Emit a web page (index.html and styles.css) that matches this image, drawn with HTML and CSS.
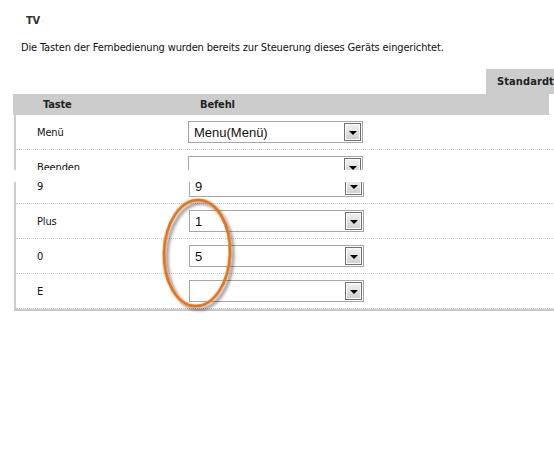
FILE: index.html
```html
<!DOCTYPE html>
<html lang="de">
<head>
<meta charset="utf-8">
<link rel="stylesheet" href="styles.css">
</head>
<body>
<div class="page">
  <h1 class="title">TV</h1>
  <p class="intro">Die Tasten der Fernbedienung wurden bereits zur Steuerung dieses Geräts eingerichtet.</p>
  <div class="tabs"><div class="tab">Standardtasten</div></div>
  <div class="table">
    <div class="part part-top">
      <div class="thead"><span class="th th-key">Taste</span><span class="th">Befehl</span></div>
      <div class="tbody">
        <div class="row">
          <span class="label">Menü</span>
          <div class="select"><span class="value">Menu(Menü)</span><span class="btn"><i class="arrow"></i></span></div>
        </div>
        <div class="row">
          <span class="label">Beenden</span>
          <div class="select"><span class="value"></span><span class="btn"><i class="arrow"></i></span></div>
        </div>
      </div>
    </div>
    <div class="part part-bottom">
      <div class="tbody tbody-shifted">
        <div class="row">
          <span class="label">9</span>
          <div class="select select-b"><span class="value">9</span><span class="btn"><i class="arrow"></i></span></div>
        </div>
        <div class="row">
          <span class="label">Plus</span>
          <div class="select select-b"><span class="value">1</span><span class="btn"><i class="arrow"></i></span></div>
        </div>
        <div class="row">
          <span class="label">0</span>
          <div class="select select-b"><span class="value">5</span><span class="btn"><i class="arrow"></i></span></div>
        </div>
        <div class="row">
          <span class="label">E</span>
          <div class="select select-b"><span class="value"></span><span class="btn"><i class="arrow"></i></span></div>
        </div>
      </div>
    </div>
  </div>
  <svg class="mark" width="90" height="130" viewBox="0 0 90 130" aria-hidden="true">
    <defs>
      <filter id="sh" x="-30%" y="-30%" width="160%" height="160%">
        <feGaussianBlur in="SourceAlpha" stdDeviation="1.6" result="b"/>
        <feOffset dx="3" dy="3" result="o"/>
        <feComponentTransfer><feFuncA type="linear" slope="0.45"/></feComponentTransfer>
        <feMerge><feMergeNode/><feMergeNode in="SourceGraphic"/></feMerge>
      </filter>
    </defs>
    <ellipse cx="44" cy="64" rx="33" ry="53" fill="none" stroke="#e3721e" stroke-width="3" transform="rotate(2 44 64)" filter="url(#sh)"/>
  </svg>
</div>
</body>
</html>
```

FILE: styles.css
```css
html, body {
  margin: 0;
  padding: 0;
  background: #fff;
}
body {
  width: 554px;
  height: 474px;
  overflow: hidden;
  font-family: Tahoma, "DejaVu Sans Condensed", "Liberation Sans", sans-serif;
  font-size: 11px;
  letter-spacing: -0.15px;
  color: #111;
}
.page {
  position: relative;
  padding-top: 14px;
}
.title {
  margin: 0;
  padding-left: 26px;
  font-size: 11px;
  line-height: 14px;
  font-weight: bold;
  color: #333;
}
.intro {
  margin: 13px 0 0 0;
  padding-left: 21px;
  line-height: 14px;
  color: #111;
}
.tabs {
  display: flex;
  margin-top: 14px;
  padding-left: 486px;
}
.tab {
  flex: none;
  width: 90px;
  height: 25px;
  line-height: 25px;
  padding-left: 11px;
  background: #cccccc;
  font-weight: bold;
  letter-spacing: 0.1px;
  color: #222;
  white-space: nowrap;
}
.table {
  margin-left: 13px;
}
.part {
  overflow: hidden;
}
.part-top {
  height: 76px;
}
.part-bottom {
  margin-top: 12px;
}
.thead {
  display: flex;
  align-items: center;
  width: 536px;
  height: 21px;
  background: #cccccc;
  font-weight: bold;
  color: #222;
}
.th-key {
  padding-left: 30px;
  width: 157px;
}
.tbody {
  margin-left: 1px;
  width: 560px;
  border-left: 2px solid #cdcdcd;
}
.tbody-shifted {
  margin-top: -13px;
  border-bottom: 2px solid #c9c9c9;
}
.row {
  display: flex;
  align-items: center;
  height: 34px;
  border-bottom: 1px dotted #c2c8d4;
}
.label {
  flex: none;
  width: 151px;
  padding-left: 21px;
  color: #111;
}
.select {
  box-sizing: border-box;
  display: flex;
  align-items: center;
  justify-content: space-between;
  width: 175px;
  height: 22px;
  padding: 0 1px 0 5px;
  border: 1px solid #a6a6a6;
  background: #fff;
  font-family: "Liberation Sans", Arial, sans-serif;
  font-size: 13px;
  letter-spacing: 0;
  color: #111;
}
.select-b {
  margin-left: 1px;
}
.btn {
  box-sizing: border-box;
  display: flex;
  align-items: center;
  justify-content: center;
  width: 17px;
  height: 18px;
  border: 1px solid #707070;
  box-shadow: inset 0 0 0 1px #fafafa;
  background: linear-gradient(#f2f2f2, #cfcfcf);
}
.arrow {
  display: block;
  width: 0;
  height: 0;
  margin-top: 2px;
  border-left: 4px solid transparent;
  border-right: 4px solid transparent;
  border-top: 4px solid #000;
}
.mark {
  position: absolute;
  left: 153px;
  top: 189px;
  overflow: visible;
}
```
